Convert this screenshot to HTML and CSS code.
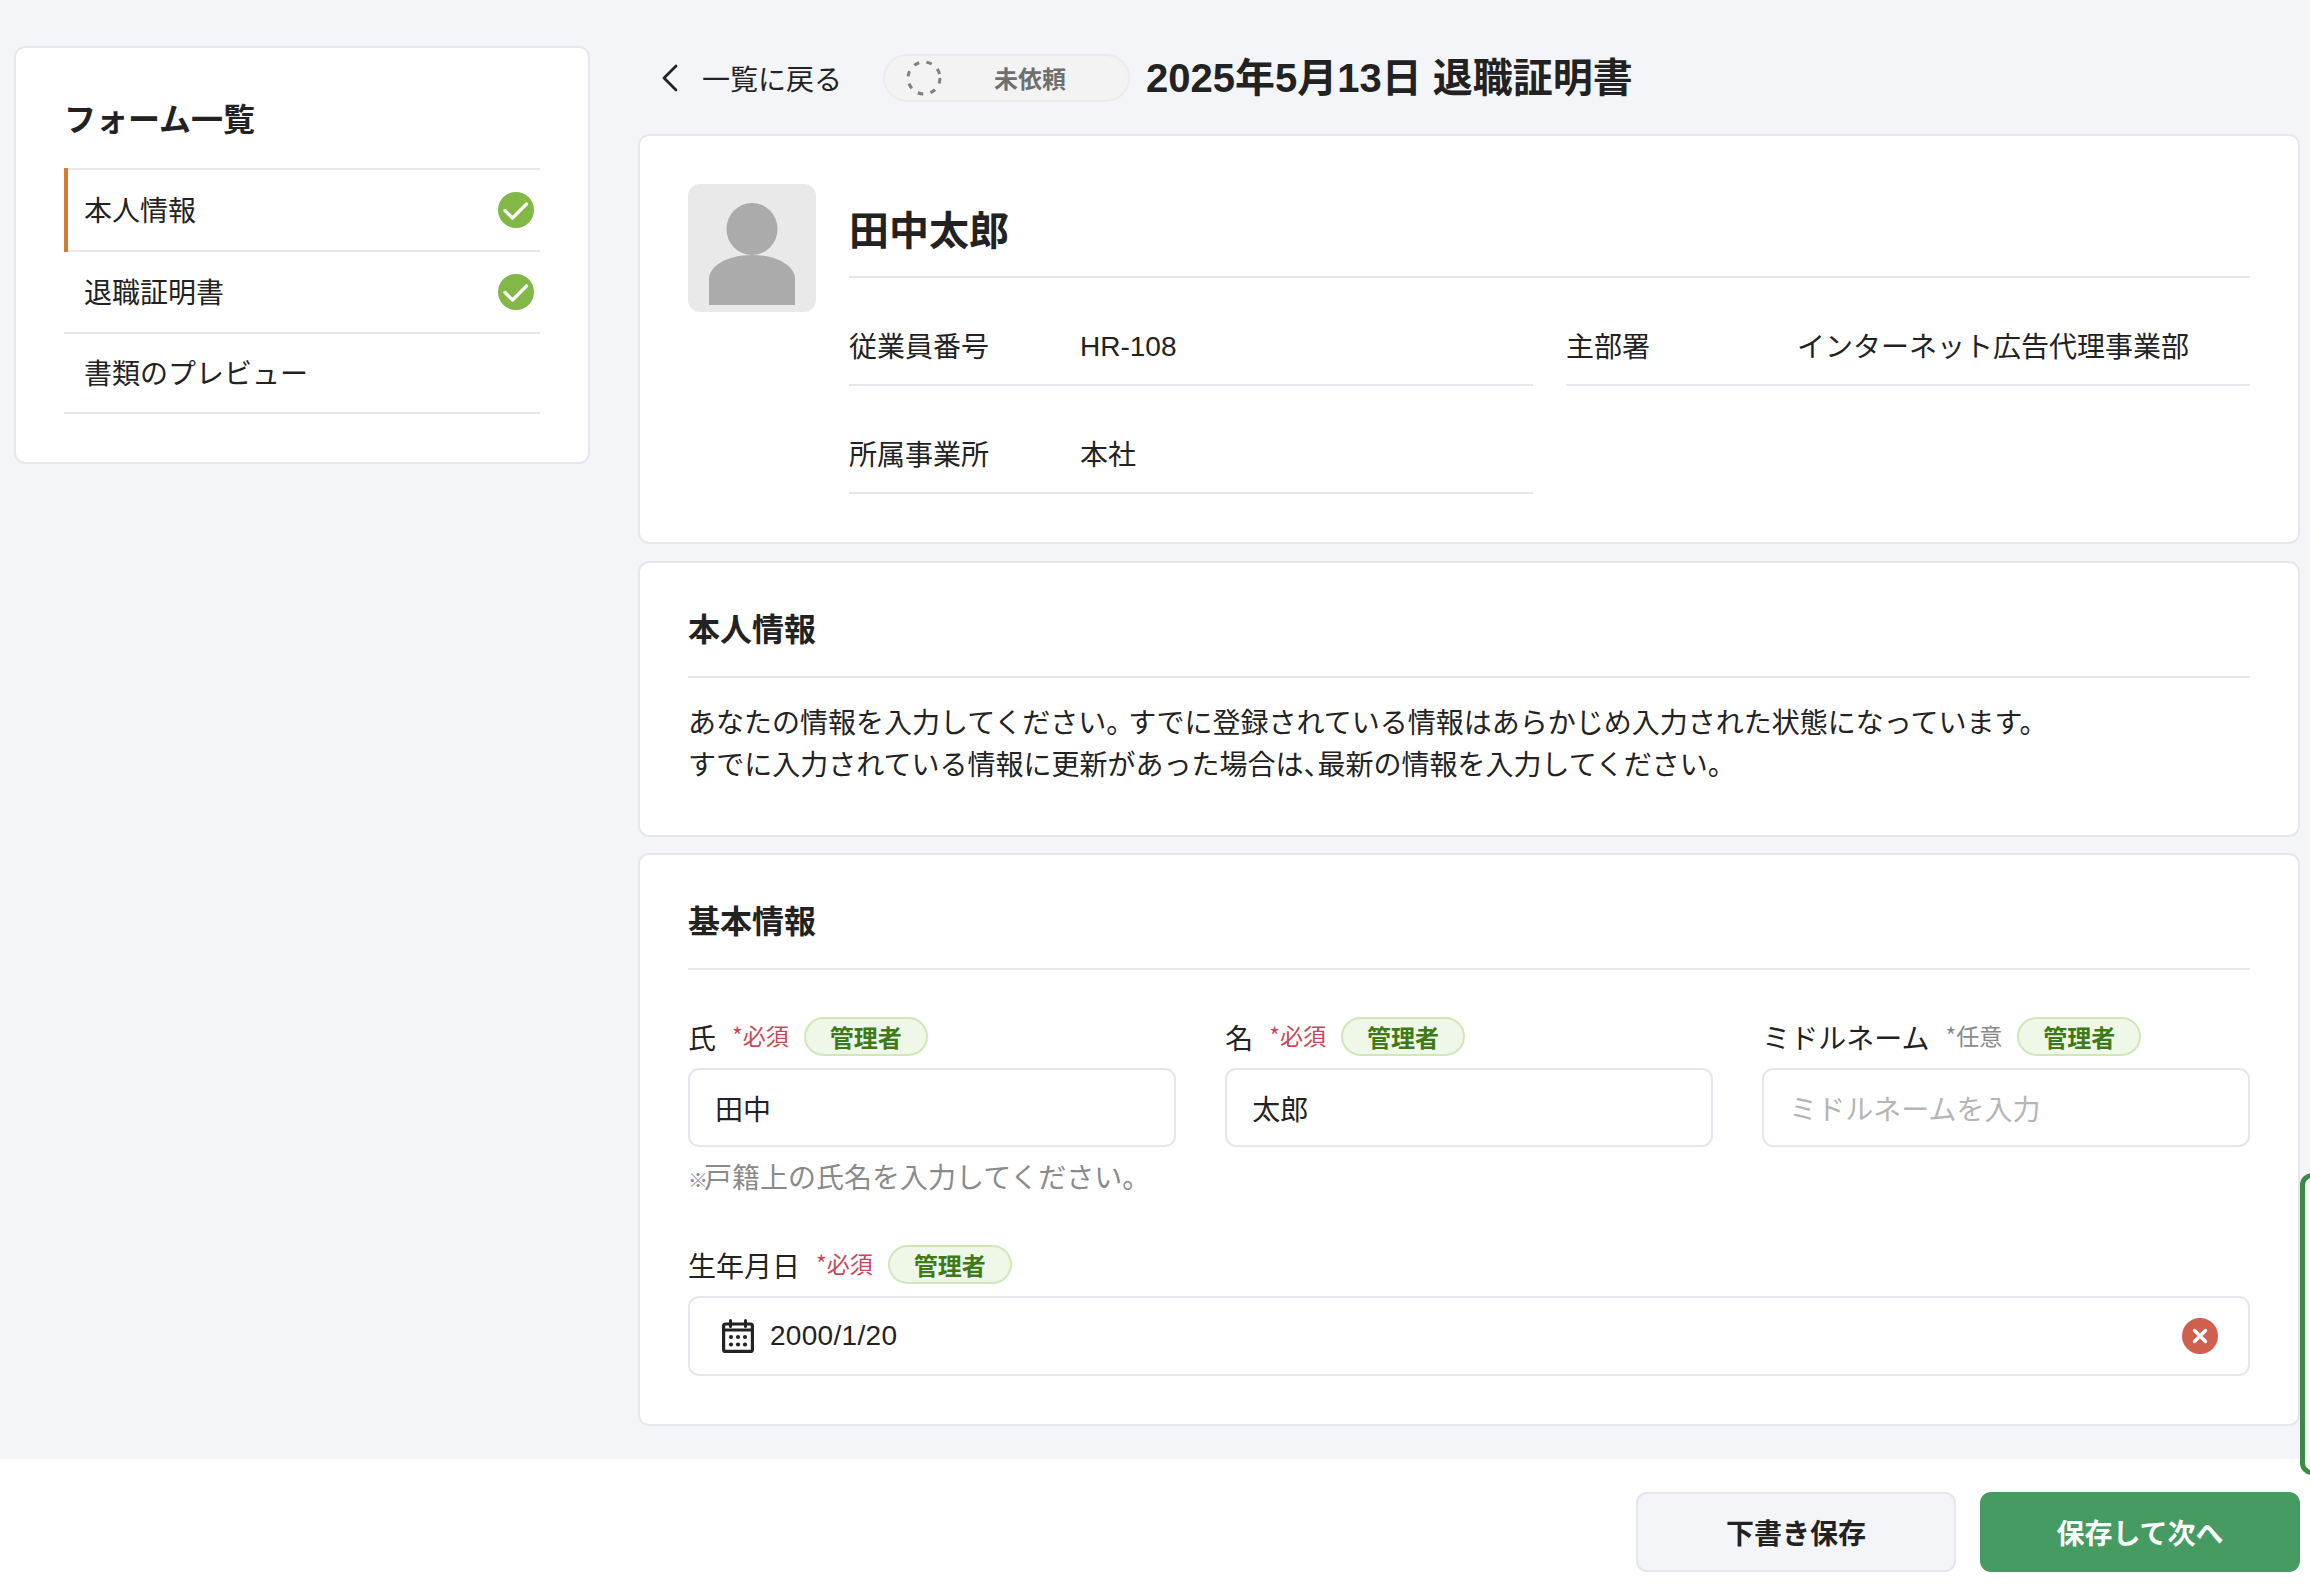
FILE: index.html
```html
<!DOCTYPE html>
<html lang="ja">
<head>
<meta charset="utf-8">
<title>退職証明書</title>
<link rel="stylesheet" href="styles.css">
</head>
<body>
<div class="page">
  <div class="layout">
    <aside class="side">
      <h2 class="side-title">フォーム一覧</h2>
      <ul class="steps">
        <li class="step active"><span>本人情報</span>
          <svg class="check" viewBox="0 0 36 36"><circle cx="18" cy="18" r="18" fill="#82b846"/><path d="M7 18.5l7.5 7.5L28.5 12" fill="none" stroke="#fff" stroke-width="3.2" stroke-linecap="round" stroke-linejoin="round"/></svg></li>
        <li class="step"><span>退職証明書</span>
          <svg class="check" viewBox="0 0 36 36"><circle cx="18" cy="18" r="18" fill="#82b846"/><path d="M7 18.5l7.5 7.5L28.5 12" fill="none" stroke="#fff" stroke-width="3.2" stroke-linecap="round" stroke-linejoin="round"/></svg></li>
        <li class="step"><span>書類のプレビュー</span></li>
      </ul>
    </aside>
    <main class="main">
      <header class="top">
        <svg class="chev" viewBox="0 0 20 32"><path d="M16 4L4 16l12 12" fill="none" stroke="#222" stroke-width="2.8" stroke-linecap="round" stroke-linejoin="round"/></svg>
        <span class="back">一覧に戻る</span>
        <span class="pill">
          <svg class="dash" viewBox="0 0 36 36"><circle cx="18" cy="18" r="16" fill="none" stroke="#808080" stroke-width="3" stroke-dasharray="5.5 7.4"/></svg>
          <b>未依頼</b>
        </span>
        <h1 class="title">2025年5月13日 退職証明書</h1>
      </header>

      <section class="card profile">
        <div class="avatar">
          <svg viewBox="0 0 128 128"><ellipse cx="64" cy="45" rx="25.5" ry="26" fill="#ababab"/><path d="M21 121V95c0-13 18-24 43-24s43 11 43 24v26z" fill="#ababab"/></svg>
        </div>
        <div class="who">
          <div class="name">田中太郎</div>
          <div class="facts">
            <div class="fact"><span class="k">従業員番号</span><span class="v latin">HR-108</span></div>
            <div class="fact"><span class="k">主部署</span><span class="v">インターネット広告代理事業部</span></div>
            <div class="fact"><span class="k">所属事業所</span><span class="v">本社</span></div>
          </div>
        </div>
      </section>

      <section class="card intro">
        <h2 class="head">本人情報</h2>
        <p class="lead">あなたの情報を入力してください<span class="tight">。</span>すでに登録されている情報はあらかじめ入力された状態になっています。<br>すでに入力されている情報に更新があった場合は<span class="tighter">、</span>最新の情報を入力してください。</p>
      </section>

      <section class="card basic">
        <h2 class="head">基本情報</h2>
        <div class="fields">
          <div class="field">
            <div class="label"><span>氏</span><em class="req">*必須</em><span class="badge">管理者</span></div>
            <div class="input">田中</div>
            <p class="hint"><span class="mark">※</span>戸籍上の氏名を入力してください。</p>
          </div>
          <div class="field">
            <div class="label"><span>名</span><em class="req">*必須</em><span class="badge">管理者</span></div>
            <div class="input">太郎</div>
          </div>
          <div class="field">
            <div class="label"><span>ミドルネーム</span><em class="opt">*任意</em><span class="badge">管理者</span></div>
            <div class="input ph">ミドルネームを入力</div>
          </div>
          <div class="field wide">
            <div class="label"><span>生年月日</span><em class="req">*必須</em><span class="badge">管理者</span></div>
            <div class="input date">
              <svg class="cal" viewBox="0 0 32 34"><rect x="1.6" y="5" width="28.8" height="27.4" rx="2" fill="none" stroke="#222" stroke-width="3.2"/><path d="M1.5 11h29" stroke="#222" stroke-width="3"/><path d="M8.5 1.5v6M23.5 1.5v6" stroke="#222" stroke-width="3" stroke-linecap="round"/><g fill="#222"><circle cx="9" cy="18" r="2.1"/><circle cx="16" cy="18" r="2.1"/><circle cx="23" cy="18" r="2.1"/><circle cx="9" cy="25.5" r="2.1"/><circle cx="16" cy="25.5" r="2.1"/><circle cx="23" cy="25.5" r="2.1"/></g></svg>
              <span class="latin dateval">2000/1/20</span>
              <svg class="clear" viewBox="0 0 36 36"><circle cx="18" cy="18" r="18" fill="#cf6050"/><path d="M12.5 12.5l11 11M23.5 12.5l-11 11" stroke="#fff" stroke-width="3.4" stroke-linecap="round"/></svg>
            </div>
          </div>
        </div>
      </section>
    </main>
  </div>
  <footer class="foot">
    <button class="btn draft">下書き保存</button>
    <button class="btn next">保存して次へ</button>
  </footer>
  <div class="peek"></div>
</div>
</body>
</html>
```
FILE: styles.css
```css
* { box-sizing: border-box; }
html, body { margin: 0; height: 100%; }
body {
  font-family: "Noto Sans CJK JP", "Noto Sans", sans-serif;
  color: #222;
  background: #f4f5f9;
  font-size: 28px;
}
.page { position: relative; width: 2310px; height: 1584px; overflow: hidden; display: flex; flex-direction: column; }
.layout { flex: 1; display: flex; align-items: flex-start; padding: 46px 10px 0 14px; gap: 48px; }
.card, .side { background: #fff; border: 2px solid #e6e6ec; border-radius: 11px; }
.side { width: 576px; height: 418px; padding: 0 48px; flex: none; }
.side-title { margin: 0; height: 120px; padding-top: 46px; font-size: 32px; line-height: 46px; font-weight: 700; }
.steps { margin: 0; padding: 0; list-style: none; border-top: 2px solid #e6e6ec; }
.step { height: 82px; border-bottom: 2px solid #e6e6ec; display: flex; align-items: center; justify-content: space-between; padding: 0 6px 0 20px; position: relative; }
.step span { margin-top: -2px; }
.step:last-child { height: 80px; }
.step.active::before { content: ""; position: absolute; left: 0; top: -2px; bottom: -2px; width: 4px; background: #d97b2f; }
.check { width: 36px; height: 36px; }
.main { flex: 1; min-width: 0; display: flex; flex-direction: column; }
.top { height: 88px; display: flex; align-items: center; padding-bottom: 24px; padding-left: 22px; }
.chev { width: 20px; height: 32px; margin-right: 22px; }
.back { font-size: 28px; }
.pill { margin-left: 41px; width: 247px; height: 48px; border: 2px solid #ebebeb; background: #f3f3f3; border-radius: 24px; display: flex; align-items: center; padding-left: 21px; }
.pill b { margin-left: 52px; margin-top: -2px; font-size: 24px; color: #6f6f6f; font-weight: 700; }
.dash { width: 36px; height: 36px; }
.title { margin: 0 0 0 16px; font-family: "Liberation Sans", "Noto Sans CJK JP", sans-serif; font-size: 40px; font-weight: 700; line-height: 56px; white-space: nowrap; }
.profile { height: 410px; padding: 48px 48px 0; display: flex; gap: 33px; }
.avatar { width: 128px; height: 128px; background: #e9e9e9; border-radius: 12px; flex: none; overflow: hidden; }
.avatar svg { display: block; width: 100%; height: 100%; }
.who { flex: 1; min-width: 0; }
.name { height: 94px; border-bottom: 2px solid #e6e6ec; font-size: 40px; font-weight: 700; line-height: 89px; }
.facts { display: grid; grid-template-columns: 1fr 1fr; column-gap: 33px; }
.fact { height: 108px; padding-top: 28px; border-bottom: 2px solid #e6e6ec; display: flex; align-items: center; }
.k { width: 231px; flex: none; }
.latin { font-family: "Liberation Sans", "Noto Sans CJK JP", sans-serif; }
.v.latin { padding-top: 3px; }
.intro { height: 276px; margin-top: 17px; padding: 0 48px; }
.head { margin: 0; height: 115px; border-bottom: 2px solid #e6e6ec; padding-top: 40px; font-size: 32px; line-height: 48px; font-weight: 700; }
.lead { margin: 22px 0 0; line-height: 42px; font-size: 28px; }
.tight { letter-spacing: -6px; }
.tighter { letter-spacing: -14px; }
.basic { height: 573px; margin-top: 16px; padding: 0 48px; }
.fields { display: grid; grid-template-columns: repeat(3, 1fr); column-gap: 49.5px; padding-top: 47px; align-items: start; }
.field.wide { grid-column: 1 / -1; margin-top: 46px; }
.label { height: 39px; display: flex; align-items: center; margin-bottom: 12px; }
.req, .opt { font-style: normal; font-size: 23px; margin-left: 16px; margin-top: -3px; }
.req { color: #c8475a; }
.opt { color: #8a8a8a; }
.badge { margin-left: 15px; width: 124px; height: 39px; background: #eef7e8; border: 2px solid #d0e8b9; border-radius: 20px; color: #3f7a18; font-size: 24px; font-weight: 700; display: flex; align-items: center; justify-content: center; }
.input { height: 79px; border: 2px solid #e6e6ec; border-radius: 11px; background: #fff; display: flex; align-items: center; padding: 0 25px; }
.ph { color: #b5b5b5; }
.hint { margin: 10px 0 0; font-size: 28px; line-height: 38px; color: #8a8a8a; }
.mark { font-size: 20px; letter-spacing: -4px; }
.date { height: 80px; padding: 0 32px; }
.cal { width: 32px; height: 34px; margin-right: 16px; flex: none; }
.dateval { letter-spacing: 0.3px; }
.clear { width: 36px; height: 36px; margin-left: auto; margin-right: -2px; }
.foot { height: 125px; background: #fff; display: flex; justify-content: flex-end; align-items: flex-start; gap: 24px; padding: 33px 10px 0 0; flex: none; }
.btn { width: 320px; height: 80px; border-radius: 11px; font: 700 28px "Noto Sans CJK JP", sans-serif; }
.draft { background: #f4f5f9; border: 2px solid #e6e6ec; color: #222; }
.next { background: #469b63; border: 0; color: #fff; }
.peek { position: absolute; left: 2300px; top: 1173px; width: 30px; height: 302px; background: #fff; border: 5px solid #3c8a48; border-radius: 12px; }
```
